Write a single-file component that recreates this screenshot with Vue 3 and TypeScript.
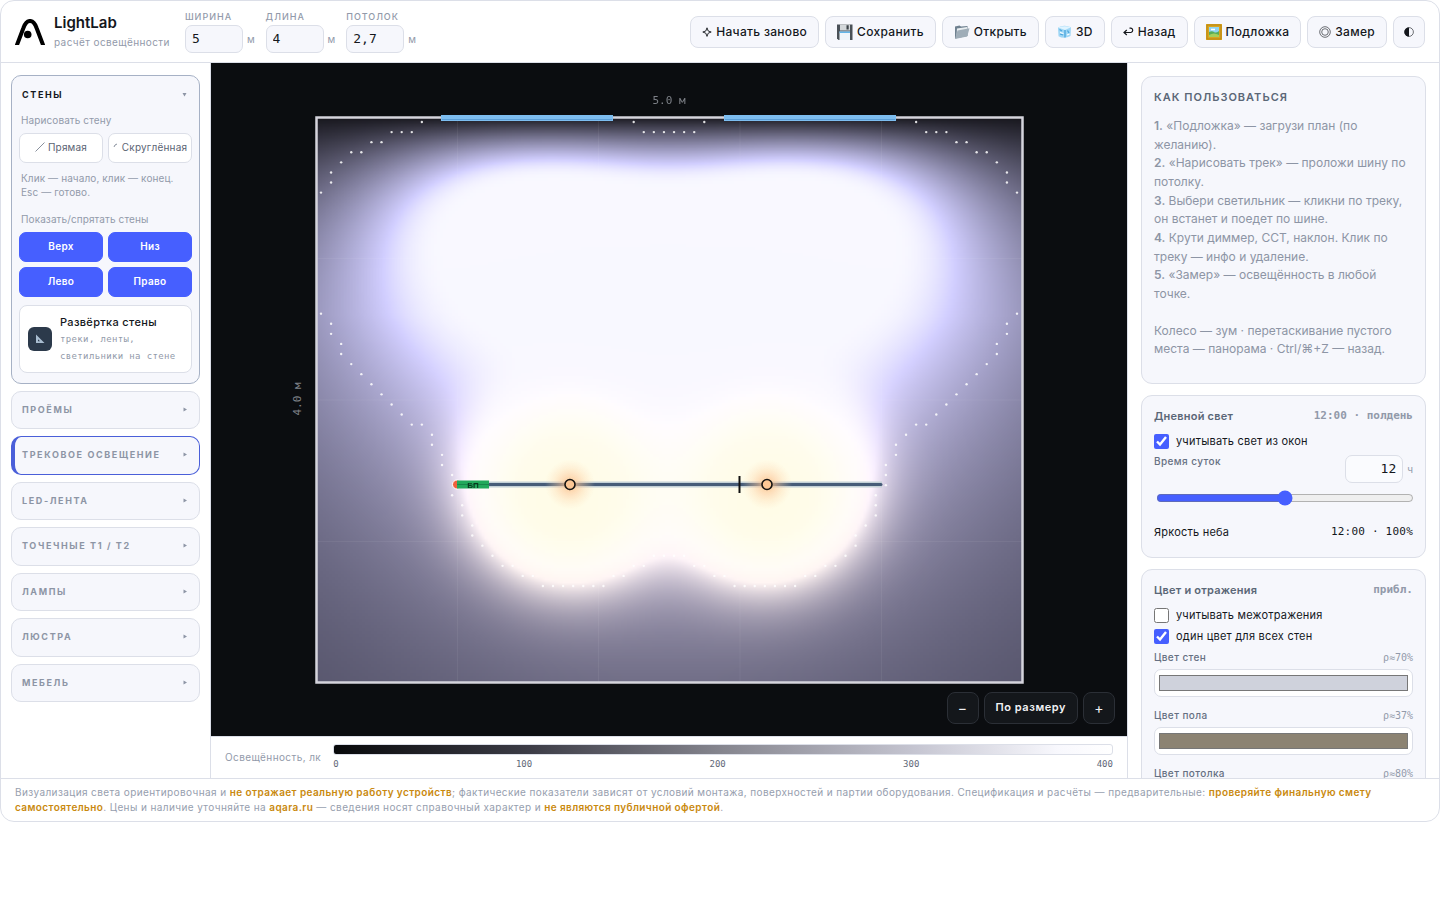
<script setup lang="ts">
import { onMounted, ref } from 'vue'

type Dim = { id: string; label: string; value: string }
type Point = { x: number; y: number }

const dims = ref<Dim[]>([
  { id: 'width', label: 'Ширина', value: '5' },
  { id: 'length', label: 'Длина', value: '4' },
  { id: 'ceiling', label: 'Потолок', value: '2,7' },
])

const walls = ['Верх', 'Низ', 'Лево', 'Право']

const sections = [
  { title: 'Проёмы', active: false },
  { title: 'Трековое освещение', active: true },
  { title: 'LED-лента', active: false },
  { title: 'Точечные T1 / T2', active: false },
  { title: 'Лампы', active: false },
  { title: 'Люстра', active: false },
  { title: 'Мебель', active: false },
]

const steps = [
  '«Подложка» — загрузи план (по желанию).',
  '«Нарисовать трек» — проложи шину по потолку.',
  'Выбери светильник — кликни по треку, он встанет и поедет по шине.',
  'Крути диммер, CCT, наклон. Клик по треку — инфо и удаление.',
  '«Замер» — освещённость в любой точке.',
]

const surfaces = ref([
  { id: 'walls', label: 'Цвет стен', rho: 'ρ≈70%', color: '#cfd2dc' },
  { id: 'floor', label: 'Цвет пола', rho: 'ρ≈37%', color: '#8c8372' },
  { id: 'ceil', label: 'Цвет потолка', rho: 'ρ≈80%', color: '#e8e8ec' },
])

const daylight = ref(true)
const bounces = ref(false)
const sameColor = ref(true)
const hour = ref(12)

/* Isoline cells: [row, first column, last column] on the sampling grid. */
const left: number[][] = [
  [0, 10, 10], [1, 7, 9], [2, 5, 6], [3, 3, 4], [4, 2, 2], [5, 1, 1], [6, 1, 1], [7, 0, 0],
  [19, 0, 0], [20, 1, 1], [21, 1, 1], [22, 2, 2], [23, 2, 2], [24, 3, 3], [25, 4, 4],
  [26, 5, 5], [27, 6, 6], [28, 7, 7], [29, 8, 8], [30, 9, 10], [31, 11, 11],
]
const center: number[][] = [
  [0, 31, 31], [1, 32, 37], [0, 38, 38],
  [32, 11, 11], [33, 12, 12], [34, 12, 12], [35, 13, 13], [37, 13, 13], [38, 14, 14], [39, 14, 14],
  [40, 15, 15], [41, 15, 15], [42, 16, 16], [43, 17, 17], [44, 18, 19], [45, 20, 21],
  [46, 22, 28], [45, 29, 30], [44, 31, 32], [43, 33, 36], [44, 37, 38], [45, 39, 40],
  [46, 41, 47], [45, 48, 49], [44, 50, 51], [43, 52, 52], [42, 53, 53], [41, 53, 53],
  [40, 54, 54], [39, 55, 55], [38, 55, 55], [37, 55, 55], [36, 56, 56], [35, 56, 56],
  [34, 56, 56], [33, 57, 57], [32, 57, 57],
]
const mirrored = left.map(([r, a, b]) => [r, 69 - b, 69 - a])
const isoline: Point[] = [...left, ...mirrored, ...center].flatMap(([row, a, b]) =>
  Array.from({ length: b - a + 1 }, (_, k) => ({
    x: 110 + ((a + k) * 696) / 69,
    y: 59 + (row * 464) / 46,
  })),
)

const heat = ref<HTMLCanvasElement | null>(null)

/* Room is 5 × 4 m. Two windows on the top wall, two warm spots on the track. */
function daylightAt(x: number, y: number): number {
  const h = 1.3
  let e = 0
  for (const cx of [1.49, 3.5]) {
    for (let k = -3; k <= 3; k++) {
      const dx = x - (cx + k * 0.19)
      const r2 = dx * dx + y * y + h * h
      e += (y * h) / (r2 * r2)
    }
  }
  return e
}

function spotAt(x: number, y: number): number {
  let e = 0
  for (const cx of [1.79, 3.19]) {
    const r = Math.hypot(x - cx, y - 2.6)
    e += 1.6 * Math.exp(-Math.pow(r / 0.61, 2.3)) + 0.1 * Math.exp(-Math.pow(r / 1.2, 2))
  }
  return e
}

onMounted(() => {
  const c = heat.value
  const ctx = c?.getContext('2d')
  if (!c || !ctx) return
  const img = ctx.createImageData(c.width, c.height)
  for (let j = 0; j < c.height; j++) {
    for (let i = 0; i < c.width; i++) {
      const x = ((i + 0.5) / c.width) * 5
      const y = ((j + 0.5) / c.height) * 4
      const d = daylightAt(x, y) * 1.02
      const s = spotAt(x, y)
      const a = 0.09 + 0.15 * Math.min(1, y / 1.4)
      const rgb = [
        a + d * 0.8 + s,
        a * 0.98 + d * 0.79 + s * (0.89 + 0.09 * Math.min(1, s)),
        a * 1.26 + d * 0.97 + s * 0.68,
      ]
      const m = Math.max(...rgb)
      const cap = 0.86 - 0.4 * Math.min(1, s / 1.3)
      const q = Math.min(1, Math.max(0, (m - 1) / 0.3))
      const t = cap * q * (2 - q)
      const o = (j * c.width + i) * 4
      rgb.forEach((v, n) => {
        const base = m > 1 ? v / m : v
        img.data[o + n] = 255 * (base + (1 - base) * t)
      })
      img.data[o + 3] = 255
    }
  }
  ctx.putImageData(img, 0, 0)
})
</script>

<template>
  <div class="app">
    <header class="top">
      <svg class="logo" viewBox="0 0 30 26" aria-hidden="true">
        <path d="M.8 29 L8.400 9 C11.600 -.4 18.400 -.4 21.600 9 L29.200 29" fill="none" stroke="#000" stroke-width="4" />
        <circle cx="12.700" cy="15.500" r="3.800" />
      </svg>
      <div class="brand">
        <h1>LightLab</h1>
        <p>расчёт освещённости</p>
      </div>
      <div class="dims">
        <div v-for="d in dims" :key="d.id" class="dim">
          <label :for="d.id">{{ d.label }}</label>
          <div class="dim-row"><input :id="d.id" v-model="d.value" type="text" /><span>м</span></div>
        </div>
      </div>
      <nav class="tools">
        <button type="button">
          <svg width="10" height="12" viewBox="0 0 10 12"><path d="M5 1.800 6.200 5 9.200 6 6.200 7.200 5 10.400 3.800 7.200.8 6 3.800 5Z" fill="none" stroke="#14171c" stroke-width=".9" /></svg>
          Начать заново
        </button>
        <button type="button">
          <svg width="16" height="16" viewBox="0 0 16 16"><path d="M0 .5h15.500V16H1.500L0 14.500Z" fill="#4a5157" /><path d="M3 .5h10v6H3Z" fill="#d3d7da" /><path d="M9.500 1.200h2.200v4.300H9.500Z" fill="#3b4248" /><path d="M2.500 7.500h10.500V16H2.500Z" fill="#eef5fa" /><path d="M2.500 7.500h10.500v1.500H2.500Z" fill="#62b5e8" /></svg>
          Сохранить
        </button>
        <button type="button">
          <svg width="16" height="16" viewBox="0 0 16 16"><path d="M1 2.500 5.500 1.500 7 2.600 13.500 2V12L1 14.500Z" fill="#6f8190" /><path d="M3 4.500 13 3 13.500 6 2.500 12Z" fill="#e8edf0" /><path d="M3.500 6.500 15.500 4.200 13.200 12.600 1 15Z" fill="#9fadb8" /></svg>
          Открыть
        </button>
        <button type="button">
          <svg width="15" height="15" viewBox="0 0 15 15"><path d="M1 3.500Q7 0 14 3.200L13.500 12Q7 15.500 1.500 12.200Z" fill="#9ed6f5" /><path d="M1 3.500Q7 1 14 3.200L8 6Z" fill="#dff4ff" /><path d="M8 6V13.600M2.500 5.500 5 7M3 10 6 11M10.500 6.500 12 9" stroke="#4da6dc" stroke-width="1.300" fill="none" /><path d="M3 8.500 6.500 9.500M10 11 12.500 10" stroke="#fff" stroke-width="1.200" /></svg>
          3D
        </button>
        <button type="button">
          <svg width="11" height="12" viewBox="0 0 11 12"><path d="M1 6.500H8A2.200 2.200 0 0 0 8 2.200H6.500M3.800 4 1 6.500 3.800 9" fill="none" stroke="#14171c" stroke-width="1.200" /></svg>
          Назад
        </button>
        <button type="button">
          <svg width="16" height="16" viewBox="0 0 16 16"><path d="M0 0h16v16H0Z" fill="#d9a520" /><path d="M1 1h14v14H1Z" fill="none" stroke="#b98512" /><path d="M3 3h10v10H3Z" fill="#8fd3f2" /><path d="M3 8Q6 6.500 8 8T13 7V13H3Z" fill="#58ad58" /><path d="M3 11Q8 8 13 11V13H3Z" fill="#a5cf5b" /><path d="M5 5.500H9" stroke="#fff" stroke-width="1.500" /></svg>
          Подложка
        </button>
        <button type="button">
          <svg width="12" height="12" viewBox="0 0 12 12" fill="none" stroke="#30343a" stroke-width=".7"><circle cx="6" cy="6" r="5.300" /><circle cx="6" cy="6" r="3.300" /></svg>
          Замер
        </button>
        <button type="button" class="square" aria-label="Тема">
          <svg width="10" height="12" viewBox="0 0 10 12"><circle cx="5" cy="6" r="4.400" fill="none" stroke="#14171c" stroke-width=".6" /><path d="M5 1.400A4.600 4.600 0 0 0 5 10.600Z" fill="#14171c" /></svg>
        </button>
      </nav>
    </header>

    <main class="work">
      <aside class="side">
        <section class="card walls">
          <button type="button" class="fold open"><span>Стены</span><svg width="5" height="5" viewBox="0 0 5 5"><path d="M.5 1h4L2.500 4.500Z" /></svg></button>
          <p class="cap">Нарисовать стену</p>
          <div class="pair">
            <button type="button" class="tool"><svg width="10" height="10" viewBox="0 0 10 10"><path d="M.5 9.500 9.500.5" /></svg>Прямая</button>
            <button type="button" class="tool"><svg width="6" height="10" viewBox="0 0 6 10"><path d="M1 5Q1.500 2.500 4 2" /></svg>Скруглённая</button>
          </div>
          <p class="cap note">Клик — начало, клик — конец. Esc — готово.</p>
          <p class="cap">Показать/спрятать стены</p>
          <div class="pair">
            <button v-for="w in walls" :key="w" type="button" class="wall">{{ w }}</button>
          </div>
          <button type="button" class="unfold">
            <span class="tile"><svg width="10" height="10" viewBox="0 0 10 10"><path d="M1 .5V9H9.500ZM3 5.200V7.200H5Z" fill="#a9bdd0" fill-rule="evenodd" /></svg></span>
            <span class="unfold-text"><b>Развёртка стены</b><small>треки, ленты, светильники на стене</small></span>
          </button>
        </section>
        <button v-for="s in sections" :key="s.title" type="button" class="card fold" :class="{ active: s.active }">
          <span>{{ s.title }}</span><svg width="4" height="5" viewBox="0 0 4 5"><path d="M.5.5v4L4 2.500Z" /></svg>
        </button>
      </aside>

      <section class="middle">
        <div class="stage">
          <svg class="plan" viewBox="0 0 916 673" preserveAspectRatio="xMidYMid meet">
            <foreignObject x="105" y="54" width="707" height="566">
              <canvas ref="heat" class="heat" width="236" height="189"></canvas>
            </foreignObject>
            <path class="mesh" d="M246.500 54V620M387.500 54V620M529 54V620M670.500 54V620M105 195.500H812M105 337H812M105 478.500H812" />
            <rect x="105.500" y="54.500" width="706" height="565" fill="none" stroke="#d5d4dc" stroke-width="2.500" />
            <g v-for="wx in [230, 513]" :key="wx">
              <rect :x="wx" y="52" width="172" height="6" fill="#7dbdf0" />
              <path :d="`M${wx + 1} 56.500H${wx + 171}`" stroke="#5c9fd8" />
            </g>
            <circle v-for="(p, n) in isoline" :key="n" :cx="p.x" :cy="p.y" r="1.200" fill="#fff" fill-opacity=".85" />
            <defs>
              <radialGradient id="glow">
                <stop offset="0" stop-color="#fbbd84" stop-opacity=".9" />
                <stop offset=".4" stop-color="#fcc798" stop-opacity=".5" />
                <stop offset="1" stop-color="#fee2b8" stop-opacity="0" />
              </radialGradient>
            </defs>
            <path d="M244 421.500H671" stroke="#c3d0d6" stroke-width="6" />
            <path d="M244 421.500H670" stroke="#475c78" stroke-width="3" stroke-linecap="round" />
            <circle cx="246" cy="421.500" r="4.500" fill="#f0603c" stroke="#fff" />
            <rect x="246" y="417.500" width="32" height="8" fill="#22a95b" />
            <path d="M246 421.500H278" stroke="#17874a" />
            <text class="psu" x="262" y="425" text-anchor="middle">БП</text>
            <path d="M528.500 413V430" stroke="#111" stroke-width="2" />
            <g v-for="lx in [359, 556]" :key="lx">
              <circle :cx="lx" cy="421.500" r="25" fill="url(#glow)" />
              <circle :cx="lx" cy="421.500" r="5" fill="#fdc795" stroke="#161412" stroke-width="1.600" />
            </g>
            <text class="size" x="458" y="41" text-anchor="middle">5.0 м</text>
            <text class="size" x="90" y="336" text-anchor="middle" transform="rotate(-90 90 336)">4.0 м</text>
          </svg>
          <div class="zoom">
            <button type="button">−</button><button type="button" class="fit">По размеру</button><button type="button">+</button>
          </div>
        </div>
        <div class="legend">
          <span class="legend-name">Освещённость, лк</span>
          <div class="scale">
            <div class="bar"></div>
            <div class="ticks"><span v-for="t in [0, 100, 200, 300, 400]" :key="t">{{ t }}</span></div>
          </div>
        </div>
      </section>

      <aside class="panel">
        <section class="box help">
          <h2>Как пользоваться</h2>
          <p v-for="(s, n) in steps" :key="n"><b>{{ n + 1 }}.</b> {{ s }}</p>
          <p class="keys">Колесо — зум · перетаскивание пустого места — панорама · Ctrl/⌘+Z — назад.</p>
        </section>
        <section class="box day">
          <div class="head"><h3>Дневной свет</h3><span>12:00 · полдень</span></div>
          <label class="check"><input v-model="daylight" type="checkbox" />учитывать свет из окон</label>
          <div class="time">
            <label for="hour">Время суток</label>
            <input id="hour" v-model="hour" type="text" /><span>ч</span>
          </div>
          <input v-model="hour" class="range" type="range" min="0" max="24" aria-label="Время суток" />
          <div class="sky"><span>Яркость неба</span><span class="mono">12:00 · 100%</span></div>
        </section>
        <section class="box">
          <div class="head"><h3>Цвет и отражения</h3><span>прибл.</span></div>
          <label class="check"><input v-model="bounces" type="checkbox" />учитывать межотражения</label>
          <label class="check"><input v-model="sameColor" type="checkbox" />один цвет для всех стен</label>
          <div class="surfaces">
            <div v-for="s in surfaces" :key="s.id" class="surface">
              <div class="surface-head"><label :for="s.id">{{ s.label }}</label><span>{{ s.rho }}</span></div>
              <input :id="s.id" v-model="s.color" type="color" />
            </div>
          </div>
        </section>
      </aside>
    </main>

    <footer class="foot">
      Визуализация света ориентировочная и <b>не отражает реальную работу устройств</b>; фактические показатели зависят от условий монтажа, поверхностей и партии оборудования. Спецификация и расчёты — предварительные: <b>проверяйте финальную смету самостоятельно</b>. Цены и наличие уточняйте на <a href="#">aqara.ru</a> — сведения носят справочный характер и <b>не являются публичной офертой</b>.
    </footer>
  </div>
</template>

<style>
body {
  background: #fff;
}
</style>

<style scoped>
* {
  box-sizing: border-box;
}
.app {
  --mono: "DejaVu Sans Mono", "Liberation Mono", monospace;
  --line: #dcdfe8;
  --soft: #f6f7fc;
  --muted: #929aaa;
  --blue: #465fff;
  display: flex;
  flex-direction: column;
  height: calc(100vh - 78px);
  border: 1px solid var(--line);
  border-radius: 14px;
  overflow: hidden;
  background: #fff;
  color: #14171c;
  font-family: Inter, "Liberation Sans", "DejaVu Sans", sans-serif;
  font-size: 12px;
}
h1, h2, h3, p {
  margin: 0;
}
button, input {
  font: inherit;
  color: inherit;
}
button {
  cursor: pointer;
}
.top {
  display: flex;
  align-items: center;
  flex: none;
  height: 62px;
  padding: 0 14px;
  border-bottom: 1px solid var(--line);
}
.logo {
  width: 30px;
  height: 26px;
  margin-right: 9px;
}
.brand h1 {
  font-size: 15px;
  line-height: 20px;
  font-weight: 600;
}
.brand p {
  margin-top: 1px;
  font-size: 10px;
  line-height: 16px;
  letter-spacing: 0.04em;
  color: var(--muted);
}
.dims {
  display: flex;
  gap: 11px;
  margin-left: 15px;
}
.dim label {
  display: block;
  font-size: 9px;
  line-height: 14px;
  letter-spacing: 1px;
  text-transform: uppercase;
  color: var(--muted);
  font-weight: 500;
}
.dim-row {
  display: flex;
  align-items: center;
  gap: 4px;
  margin-top: 1px;
  font-size: 10px;
  color: var(--muted);
}
.dim input {
  width: 58px;
  height: 28px;
  padding: 0 6px 2px;
  border: 1px solid var(--line);
  border-radius: 7px;
  background: var(--soft);
  color: #14171c;
  font: 13px var(--mono);
}
.tools {
  display: flex;
  gap: 6px;
  margin-left: auto;
}
.tools button {
  display: flex;
  align-items: center;
  justify-content: center;
  gap: 4px;
  height: 32px;
  padding: 0 11px;
  border: 1px solid var(--line);
  border-radius: 8px;
  background: var(--soft);
  font-size: 12px;
  font-weight: 500;
  letter-spacing: 0.025em;
  white-space: nowrap;
}
.tools .square {
  width: 32px;
  padding: 0;
}
.work {
  display: flex;
  flex: 1;
  min-height: 0;
}
.side {
  display: flex;
  flex-direction: column;
  gap: 7px;
  flex: none;
  width: 210px;
  padding: 12px 10px;
  border-right: 1px solid var(--line);
  overflow: hidden;
}
.card {
  border: 1px solid var(--line);
  border-radius: 10px;
  background: var(--soft);
}
.walls {
  padding: 0 7px 10px;
  border-color: #a6b1c5;
}
.fold {
  display: flex;
  align-items: center;
  justify-content: space-between;
  width: 100%;
  padding: 11px 12px 12px 10px;
  font-size: 9px;
  line-height: 1.5;
  font-weight: 700;
  letter-spacing: 0.18em;
  text-transform: uppercase;
  color: #8d95a5;
}
.fold svg {
  fill: #8d95a5;
}
.fold.open {
  padding: 12px 5px 11px 3px;
  border: 0;
  background: none;
  color: #14171c;
}
.fold.active {
  border-color: #4a5fd9;
  border-left-width: 4px;
  padding-left: 7px;
}
.cap {
  padding: 0 2px;
  font-size: 10px;
  line-height: 14px;
  letter-spacing: 0.01em;
  color: var(--muted);
}
.note {
  margin: 8px 0 13px;
}
.pair {
  display: grid;
  grid-template-columns: 1fr 1fr;
  gap: 5px;
  margin-top: 6px;
}
.tool, .wall {
  display: flex;
  align-items: center;
  justify-content: center;
  height: 30px;
  padding: 0 0 2px;
  border: 1px solid var(--line);
  border-radius: 7px;
  background: #fff;
  font-size: 10px;
  letter-spacing: 0.03em;
  color: #5b6474;
}
.tool {
  gap: 3px;
  letter-spacing: 0.02em;
}
.tool svg {
  fill: none;
  stroke: #6b7484;
  stroke-width: 0.8;
}
.wall {
  border-color: var(--blue);
  background: var(--blue);
  color: #fff;
  font-weight: 600;
}
.unfold {
  display: flex;
  align-items: center;
  gap: 8px;
  width: 100%;
  margin-top: 8px;
  padding: 8px 8px 7px;
  border: 1px solid var(--line);
  border-radius: 8px;
  background: #fff;
  text-align: left;
}
.tile {
  display: grid;
  place-items: center;
  flex: none;
  width: 24px;
  height: 24px;
  border-radius: 6px;
  background: #2c3a4b;
}
.unfold b {
  display: block;
  font-size: 11px;
  line-height: 17px;
  font-weight: 500;
  letter-spacing: 0.03em;
}
.unfold small {
  display: block;
  font: 9px/17px var(--mono);
  letter-spacing: 0.04em;
  color: var(--muted);
}
.middle {
  display: flex;
  flex-direction: column;
  flex: 1;
  min-width: 0;
}
.stage {
  position: relative;
  flex: 1;
  min-height: 0;
  background: #0b0d10;
}
.plan {
  display: block;
  width: 100%;
  height: 100%;
}
.heat {
  display: block;
  width: 100%;
  height: 100%;
}
.mesh {
  fill: none;
  stroke: #fff;
  stroke-opacity: 0.06;
}
.size {
  font: 11px var(--mono);
  fill: #7d8087;
}
.psu {
  font: 700 8px "Liberation Sans", sans-serif;
  fill: #08371d;
}
.zoom {
  position: absolute;
  right: 12px;
  bottom: 12px;
  display: flex;
  gap: 5px;
}
.zoom button {
  width: 32px;
  height: 32px;
  padding: 0 0 2px;
  border: 1px solid #2b2f36;
  border-radius: 8px;
  background: #14171b;
  color: #f1f2f4;
  font-size: 14px;
}
.zoom .fit {
  width: auto;
  padding: 0 11px 2px;
  font-size: 11px;
  font-weight: 600;
  letter-spacing: 0.05em;
}
.legend {
  display: flex;
  align-items: center;
  gap: 12px;
  flex: none;
  height: 42px;
  padding: 0 14px 2px;
  border-top: 1px solid var(--line);
  white-space: nowrap;
}
.legend-name {
  font-size: 10px;
  letter-spacing: 0.04em;
  color: var(--muted);
}
.scale {
  flex: 1;
}
.bar {
  height: 11px;
  border: 1px solid var(--line);
  border-radius: 3px;
  background: linear-gradient(90deg, #08090b, #3c3c46 25%, #86868f 50%, #c6c6d2 75%, #f8f8fd 93%, #fff);
}
.ticks {
  display: flex;
  justify-content: space-between;
  margin-top: 3px;
  font: 9px/12px var(--mono);
  color: #5f6878;
}
.panel {
  display: flex;
  flex-direction: column;
  gap: 11px;
  flex: none;
  width: 312px;
  padding: 13px;
  border-left: 1px solid var(--line);
  overflow: hidden;
}
.box {
  flex: none;
  padding: 12px;
  border: 1px solid var(--line);
  border-radius: 11px;
  background: var(--soft);
}
.help {
  padding-bottom: 24px;
  line-height: 1.555;
  color: #8d95a5;
}
.help h2 {
  margin-bottom: 12px;
  font-size: 11px;
  line-height: 16px;
  font-weight: 600;
  letter-spacing: 1px;
  text-transform: uppercase;
  color: #5b6777;
}
.help b {
  font-weight: 600;
}
.help .keys {
  margin-top: 18px;
}
.head {
  display: flex;
  justify-content: space-between;
  line-height: 16px;
  margin-bottom: 7px;
}
.head h3 {
  font-size: 11px;
  font-weight: 600;
  letter-spacing: 0.02em;
  color: #5b6777;
}
.head span {
  font: 700 11px/16px var(--mono);
  color: var(--muted);
}
.check {
  display: flex;
  align-items: center;
  gap: 7px;
  height: 21px;
  font-size: 11px;
  letter-spacing: 0.02em;
}
.check input {
  width: 15px;
  height: 15px;
  margin: 0;
  accent-color: var(--blue);
}
.time {
  display: flex;
  align-items: center;
  gap: 4px;
  margin-top: 3px;
  font-size: 10px;
  color: var(--muted);
}
.time label {
  align-self: flex-start;
  margin-right: auto;
  font-weight: 500;
  letter-spacing: 0.04em;
  color: #667082;
}
.time input {
  width: 58px;
  height: 28px;
  padding: 0 6px;
  border: 1px solid var(--line);
  border-radius: 7px;
  background: #fafbfe;
  color: #14171c;
  font: 13px var(--mono);
  text-align: right;
}
.range {
  display: block;
  width: calc(100% - 1px);
  height: 16px;
  margin: 7px 0 0 2px;
  accent-color: var(--blue);
}
.sky {
  display: flex;
  justify-content: space-between;
  margin: 18px 0 5px;
  font-size: 11px;
  line-height: 16px;
  letter-spacing: 0.02em;
}
.mono {
  font-family: var(--mono);
}
.surfaces {
  margin-top: 3px;
}
.surface {
  margin-bottom: 11px;
}
.surface-head {
  display: flex;
  justify-content: space-between;
  margin-bottom: 4px;
  font-size: 10px;
  line-height: 15px;
}
.surface-head label {
  font-weight: 500;
  letter-spacing: 0.04em;
  color: #667082;
}
.surface-head span {
  font-family: var(--mono);
  color: var(--muted);
}
.surface input {
  display: block;
  width: 100%;
  height: 28px;
  padding: 1px 2px;
  border: 1px solid var(--line);
  border-radius: 7px;
  background: #fff;
}
.foot {
  flex: none;
  padding: 6px 14px;
  border-top: 1px solid var(--line);
  font-size: 10px;
  line-height: 15px;
  letter-spacing: 0.04em;
  color: #969eae;
}
.foot b, .foot a {
  font-weight: 600;
  color: #c9890e;
  text-decoration: none;
}
</style>
